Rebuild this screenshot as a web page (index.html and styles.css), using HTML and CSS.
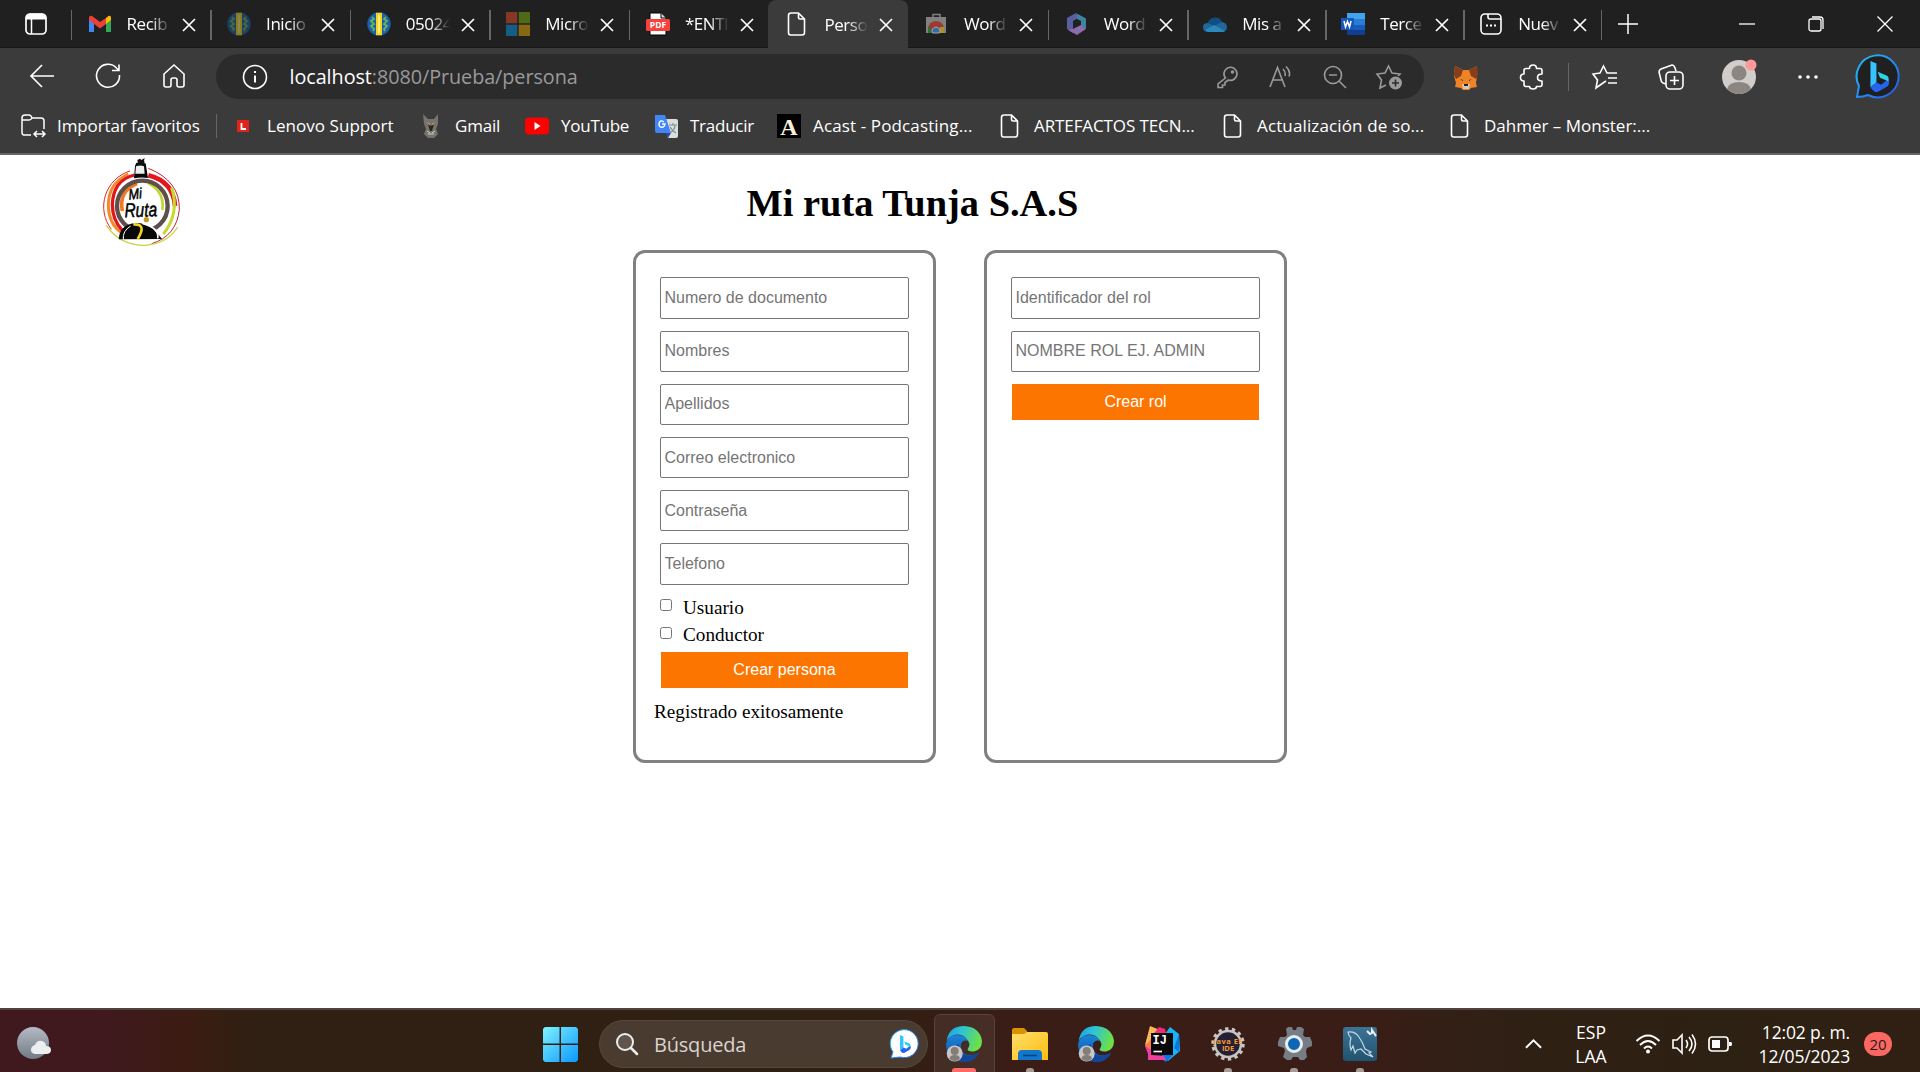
FILE: index.html
```html
<!DOCTYPE html>
<html lang="es">
<head>
<meta charset="utf-8">
<title>Persona</title>
<link rel="stylesheet" href="styles.css">
</head>
<body>
<svg class="defs" aria-hidden="true">
  <defs>
    <linearGradient id="gEdge" x1="0" y1="0" x2="1" y2=".3"><stop offset="0" stop-color="#1f9be6"/><stop offset=".45" stop-color="#2cc3d6"/><stop offset="1" stop-color="#6be04a"/></linearGradient>
    <linearGradient id="gEdge2" x1="0" y1="0" x2="0" y2="1"><stop offset="0" stop-color="#1a86dc"/><stop offset="1" stop-color="#114a9c"/></linearGradient>
    <linearGradient id="gBing" x1="0" y1="0" x2="1" y2="1"><stop offset="0" stop-color="#22c3f4"/><stop offset="1" stop-color="#2456f0"/></linearGradient>
    <linearGradient id="gWin" x1="0" y1="0" x2="1" y2="1"><stop offset="0" stop-color="#7df3ff"/><stop offset="1" stop-color="#0a97ff"/></linearGradient>
    <linearGradient id="gMoon" x1="0" y1="0" x2="0" y2="1"><stop offset="0" stop-color="#b4bbc4"/><stop offset="1" stop-color="#727a84"/></linearGradient>
    <linearGradient id="gFold" x1="0" y1="0" x2="1" y2="1"><stop offset="0" stop-color="#ffe06b"/><stop offset="1" stop-color="#fdbc10"/></linearGradient>
    <linearGradient id="gSql" x1="0" y1="0" x2="0" y2="1"><stop offset="0" stop-color="#3c7396"/><stop offset="1" stop-color="#20536e"/></linearGradient>
  </defs>
  <symbol id="x" viewBox="0 0 16 16"><path d="M2 2l12 12M14 2L2 14" fill="none" stroke="#fff" stroke-width="1.7"/></symbol>
  <symbol id="doc" viewBox="0 0 24 24"><path d="M5.500 1h8l6 6v13.500q0 2.500-2.500 2.500H5.500Q3.500 23 3.500 20.500V3.500Q3.500 1 6 1M13.500 1v4.500q0 1.500 1.500 1.500h4.500" fill="none" stroke="#fff" stroke-width="1.6" stroke-linejoin="round"/></symbol>
  <symbol id="crest" viewBox="0 0 24 24"><circle cx="12" cy="12" r="11.700" fill="#1c5fa8"/><path d="M9 .8h6v22.400H9z" fill="#f4d51d"/><path d="M5 5l2 2-3 2 3 3-3 2 3 3-1 2M19 5l-2 2 3 2-3 3 3 2-3 3 1 2" stroke="#66b560" stroke-width="1.800" fill="none"/><path d="M12 3v18" stroke="#fff3a0" stroke-width="1.500"/></symbol>
  <symbol id="edge" viewBox="0 0 36 36"><path d="M0 18Q2 9 11 9q9 0 11 6-5-2-7 3-1 7 4 10 6 3 14-1-5 9-15 9Q0 35 0 18z" fill="url(#gEdge2)"/><path d="M13 18q-1 9 6 11 6 2 14-2-4 9-15 9-11-3-9-13 1-4 4-5z" fill="#10479b"/><path d="M.5 15Q3 0 18 0q16 1 18 15 0 9-8 10.500-6 0-6.500-2 .5-1 1.500-3 1-3-1-6Q18 8 11 8.500 4 9 .5 15z" fill="url(#gEdge)"/><circle cx="8.700" cy="27.500" r="8" fill="#c9c6c3"/><circle cx="8.700" cy="25" r="4" fill="#827d79"/><path d="M3.500 33q0-4 5.200-4t5.200 4q-5 4-10.400 0z" fill="#827d79"/></symbol>
  <symbol id="bingb" viewBox="0 0 16 26"><path d="M0 0l5 2v16l-5 4z" fill="#35c2ff"/><path d="M0 22l5-4 4 2 6-5q2 5-2 7l-7 4q-3 1-6-4z" fill="#2763ee"/><path d="M6 9l7 3q3 1 2 5l-7-3z" fill="#2ed4e5"/></symbol>
</svg>

<div class="screen">
  <header class="browser">
    <div class="tabs">
      <div class="tab-menu"><svg class="i24" viewBox="0 0 24 24"><rect x="2" y="2" width="20" height="20" rx="4" fill="none" stroke="#fff" stroke-width="1.700"/><path d="M2 7V6q0-4 4-4h12q4 0 4 4v1z" fill="#fff" stroke="#fff"/><path d="M7.500 7v15" stroke="#fff" stroke-width="1.500"/></svg></div>
      <div class="tab"><svg class="i24" viewBox="0 0 24 24"><path d="M1 6v14h5V10z" fill="#4285f4"/><path d="M18 10v10h5V6z" fill="#34a853"/><path d="M18 6l2.500-2Q23 3 23 6v2l-5 4z" fill="#fbbc04"/><path d="M1 8V6q0-3 3-2l8 6 6-4v6l-6 4.500z" fill="#ea4335"/></svg><span>Recib</span><svg class="x"><use href="#x"/></svg></div>
      <div class="tab"><svg class="i24 dim"><use href="#crest"/></svg><span>Inicio</span><svg class="x"><use href="#x"/></svg></div>
      <div class="tab"><svg class="i24"><use href="#crest"/></svg><span>05024</span><svg class="x"><use href="#x"/></svg></div>
      <div class="tab"><svg class="i24" viewBox="0 0 24 24"><path d="M0 0h11.300v11.300H0z" fill="#843725"/><path d="M12.700 0H24v11.300H12.700z" fill="#4d6b14"/><path d="M0 12.700h11.300V24H0z" fill="#155d82"/><path d="M12.700 12.700H24V24H12.700z" fill="#876813"/></svg><span>Micro</span><svg class="x"><use href="#x"/></svg></div>
      <div class="tab last"><svg class="i24 pdf-icon" viewBox="0 0 24 24"><path d="M4 1h11l5 5v17H4z" fill="#fff" stroke="#000"/><path d="M15 1v5h5" fill="#ddd" stroke="#000"/><rect x="0" y="7" width="24" height="12" rx="1.500" fill="#f7413d"/><text x="12" y="16.200" text-anchor="middle" class="pdf">PDF</text></svg><span>*ENTI</span><svg class="x"><use href="#x"/></svg></div>
      <div class="tab active"><svg class="i24"><use href="#doc"/></svg><span>Perso</span><svg class="x"><use href="#x"/></svg></div>
      <div class="tab"><svg class="i24 dim2" viewBox="0 0 24 24"><path d="M8 5V2.500h7V5" fill="none" stroke="#aaa" stroke-width="1.500"/><path d="M1 5h20v16H1z" fill="#aaa"/><path d="M3 17a8 8 0 0 1 16 0v4H3z" fill="#d34537"/><path d="M3 14l6 7H3z" fill="#299a4a"/><path d="M15 15h4v6h-6z" fill="#e8c32d"/><path d="M7.500 21a4 4 0 1 1 7 0z" fill="#428ce0" stroke="#ddd"/></svg><span>Word</span><svg class="x"><use href="#x"/></svg></div>
      <div class="tab"><svg class="i24" viewBox="0 0 24 24"><path d="M11 1L2 6v11l6 4 4-2-4-2V9l5-3z" fill="#5b5fa0"/><path d="M11 1l10 5.500V17l-5-3V9l-4-2V1z" fill="#3d83a2"/><path d="M8 17l8-4 5 4-9 6-9-5z" fill="#8d6cab"/></svg><span>Word</span><svg class="x"><use href="#x"/></svg></div>
      <div class="tab mid"><svg class="i24" viewBox="0 0 24 24"><path d="M5 11a7.500 7.500 0 0 1 14-1q5 1 5 5t-4 5H5q-5 0-5-5 0-4 5-4z" fill="#20679b"/><path d="M5 11a7.500 7.500 0 0 1 14-1l-8 4z" fill="#134d80"/><path d="M2 18l9-5 11 6-2 1H5z" fill="#2b8abb"/></svg><span>Mis a</span><svg class="x"><use href="#x"/></svg></div>
      <div class="tab narrow"><svg class="i24" viewBox="0 0 24 24"><path d="M6 1h18v6H6z" fill="#41a5ee"/><path d="M6 7h18v6H6z" fill="#2b7cd3"/><path d="M6 13h18v5H6z" fill="#185abd"/><path d="M6 18h18v5H6z" fill="#103f91"/><path d="M0 6h13v12H0z" fill="#1857b8"/><path d="M3 9l1.500 6 2-5.500 2 5.500L10 9" fill="none" stroke="#fff" stroke-width="1.500"/></svg><span>Terce</span><svg class="x"><use href="#x"/></svg></div>
      <div class="tab narrow"><svg class="i24" viewBox="0 0 24 24"><rect x="2" y="2" width="20" height="20" rx="4" fill="none" stroke="#fff" stroke-width="1.600"/><path d="M9 2v3q0 2 2 2h11" fill="none" stroke="#fff" stroke-width="1.600"/><path d="M7 13.500h2M11 13.500h2M15 13.500h2" stroke="#fff" stroke-width="2.200"/></svg><span>Nuev</span><svg class="x"><use href="#x"/></svg></div>
      <div class="new-tab"><svg class="i24" viewBox="0 0 24 24"><path d="M12 2v20M2 12h20" stroke="#fff" stroke-width="1.500"/></svg></div>
      <div class="window-buttons">
        <svg viewBox="0 0 16 16"><path d="M0 8h16" stroke="#fff" stroke-width="1.300"/></svg>
        <svg viewBox="0 0 16 16"><rect x="1" y="3" width="12" height="12" rx="2" fill="none" stroke="#fff" stroke-width="1.300"/><path d="M4 1h8q3 0 3 3v9" fill="none" stroke="#fff" stroke-width="1.300"/></svg>
        <svg viewBox="0 0 16 16"><path d="M.5 .5l15 15M15.500 .5l-15 15" stroke="#fff" stroke-width="1.300"/></svg>
      </div>
    </div>

    <div class="toolbar">
      <div class="nav">
        <svg class="i26" viewBox="0 0 26 26"><path d="M25 13H2M13 2L2 13l11 11" /></svg>
        <svg class="i26" viewBox="0 0 26 26"><path d="M24.500 12A11.500 11.500 0 1 1 21.500 5L24 7.500M24 1.500v6h-7"/></svg>
        <svg class="i26" viewBox="0 0 26 26"><path d="M3 11L13 2l10 9v11q0 2-2 2h-3q-2 0-2-2v-5q0-2-2-2h-2q-2 0-2 2v5q0 2-2 2H5q-2 0-2-2z"/></svg>
      </div>
      <div class="address">
        <svg class="i26" viewBox="0 0 26 26"><circle cx="13" cy="13" r="11.500"/><path d="M13 11.500v7M13 7v2" stroke-width="2"/></svg>
        <div class="url"><b>localhost</b>:8080/Prueba/persona</div>
        <div class="address-icons">
          <svg class="i26" viewBox="0 0 26 26"><path d="M11.500 14L4 20v3.500h4.500V21h2.500v-2.500l3.500-2.500a6.500 6.500 0 1 0-3-2z"/><circle cx="18.500" cy="8" r="1"/></svg>
          <svg class="i26" viewBox="0 0 26 26"><path d="M2 23L9.500 3.500 17 23M5 16h9M15 5q3 3 2 7M18 2.500q5 5 3 10"/></svg>
          <svg class="i26" viewBox="0 0 26 26"><circle cx="11" cy="11" r="8.500"/><path d="M7 11h8M17 17l7 7"/></svg>
          <svg class="i26" viewBox="0 0 26 26"><path d="M10 21l-6 3 1.500-8L1 10l8-1 3.500-7L16 9l8 1-2 2"/><circle cx="19.500" cy="19" r="6.500" fill="#9a9a9a" stroke="none"/><path d="M19.500 15.500v7M16 19h7" stroke="#2b2b2b"/></svg>
        </div>
      </div>
      <div class="extensions">
        <svg class="i26" viewBox="0 0 26 26"><g stroke="none"><path d="M2 2l8 4h6l8-4v10l-1 7 1 4-6 1-2 2h-6l-2-2-6-1 1-4-2-7z" fill="#ef8325"/><path d="M2 2l8 4-2 6-5 3-2-4zM24 2l-8 4 2 6 5 3 2-4z" fill="#873e1c"/><path d="M9 20h8l-1 5h-6z" fill="#d5c9bd"/><path d="M11 20h4v2h-4zM7 15l3 1v1zM19 15l-3 1v1z" fill="#222"/></g></svg>
        <svg class="i26" viewBox="0 0 26 26"><path d="M7 4.500h3.500q0-3.500 3.500-3.500t3.500 3.500H21q2 0 2 2V10q-4.500 0-4.500 3.500T23 17v3.500q0 2-2 2h-3.500q0 2.500-3.500 2.500t-3.500-2.500H7q-2 0-2-2V17q-3.500 0-3.500-3.500T5 10V6.500q0-2 2-2z" stroke-linejoin="round"/></svg>
        <i class="sep"></i>
        <svg class="i26" viewBox="0 0 26 26"><path d="M11 19l-7 5 1.500-8L1 10l7-1 3.500-7L15 9h10M16 14h9M16 19h9M11 19l3-2"/></svg>
        <svg class="i26" viewBox="0 0 26 26"><path d="M8 20L5 19Q3 18 3 16L1 8q0-2 2-3l11-4q2 0 3 3l1 3"/><rect x="8" y="8" width="17" height="17" rx="4"/><path d="M16.500 12v9M12 16.500h9"/></svg>
        <svg class="avatar" viewBox="0 0 38 42"><circle cx="18" cy="21" r="17" fill="#d0cdca"/><circle cx="18" cy="17" r="7.500" fill="#8b8682"/><path d="M6 33q2-7 12-7t12 7q-12 10-24 0z" fill="#8b8682"/><circle cx="30" cy="9" r="5.500" fill="#ff9999"/></svg>
        <svg class="i26" viewBox="0 0 26 26"><g fill="#fff" stroke="none"><circle cx="5" cy="13" r="1.800"/><circle cx="13" cy="13" r="1.800"/><circle cx="21" cy="13" r="1.800"/></g></svg>
        <svg class="bing" viewBox="0 0 46 46"><path d="M2 44l2-11A21 21 0 1 1 13 42Q8 44 2 44z" fill="#202020" stroke="url(#gBing)" stroke-width="2"/><use href="#bingb" x="15" y="8" width="20" height="31"/></svg>
      </div>
    </div>

    <nav class="bookmarks">
      <a class="first"><svg class="i24" viewBox="0 0 24 24"><path d="M10 21H3q-2 0-2-3V4q0-3 3-3h4q2 0 3 3h9q3 0 3 3v8M1 6h7q2 0 3-2M13 20h11M16 17l-3 3 3 3M21 17l3 3-3 3" fill="none" stroke="#fff" stroke-width="1.500"/></svg><span>Importar favoritos</span></a>
      <a><svg class="i24" viewBox="0 0 24 24"><path d="M6 6h12v12H6z" fill="#e2231a"/><path d="M10.500 9v6H15" fill="none" stroke="#fff" stroke-width="1.800"/></svg><span>Lenovo Support</span></a>
      <a><svg class="i24" viewBox="0 0 24 24"><path d="M4 0l5 5h6l4-5v10l-2 5 2 5-4 4H9l-4-4 2-5-2-5z" fill="#77736d"/><path d="M8 8l3 2v3zM16 8l-3 2v3z" fill="#c9aa71"/><path d="M9 10l3 2 3-2-2 7h-2z" fill="#29251f"/><path d="M9 20h6M8 17l3 2M16 17l-3 2" stroke="#ccc"/></svg><span>Gmail</span></a>
      <a><svg class="i24" viewBox="0 0 24 24"><rect y="3.500" width="24" height="17" rx="4" fill="#f00"/><path d="M9.500 8v8l6-4z" fill="#fff"/></svg><span>YouTube</span></a>
      <a><svg class="i24" viewBox="0 0 24 24"><path d="M10 5h12q2 0 2 2v15q0 2-2 2h-8z" fill="#ddd"/><path d="M1 1h10l6 18H3q-2 0-2-2z" fill="#4285f4"/><path d="M12 19h5l-3 5z" fill="#3046a8"/><path d="M10 8q-4-3-5 2 0 4 4 3 2-1 2-3H8" fill="none" stroke="#fff" stroke-width="1.400"/><path d="M15 11h8M19 9v2M16 19q5-3 5-8M16 13q2 4 6 6" fill="none" stroke="#78909c" stroke-width="1.200"/></svg><span>Traducir</span></a>
      <a><svg class="i24" viewBox="0 0 24 24"><path d="M0 0h24v24H0z" fill="#000"/><text x="12" y="20.500" text-anchor="middle" class="acast">A</text></svg><span>Acast - Podcasting...</span></a>
      <a><svg class="i24"><use href="#doc"/></svg><span>ARTEFACTOS TECN...</span></a>
      <a><svg class="i24"><use href="#doc"/></svg><span>Actualización de so...</span></a>
      <a><svg class="i24"><use href="#doc"/></svg><span>Dahmer – Monster:...</span></a>
    </nav>
  </header>

  <main class="page">
    <div class="masthead">
      <svg class="logo" viewBox="0 0 390 330"><g fill="none"><path d="M94 250A112 112 0 0 1 150 75" stroke="#e3281c" stroke-width="3"/><path d="M205 67Q300 105 298 190 290 270 215 293" stroke="#bd2231" stroke-width="3"/><path d="M79 238q40 60 116 60 68-5 98-55" stroke="#cad23e" stroke-width="4"/><path d="M145 84Q84 112 85 180q2 54 38 79" stroke="#f28a2b" stroke-width="9"/><path d="M163 87q-63 15-66 88 0 48 30 78" stroke="#df171d" stroke-width="10"/><path d="M205 88q75 19 80 92" stroke="#e3171d" stroke-width="14"/><path d="M275 125q25 76-25 139" stroke="#c7d82e" stroke-width="9"/><path d="M127 195q-12-60 44-82" stroke="#f17925" stroke-width="11"/><path d="M205 112q50 26 42 80" stroke="#c3d62e" stroke-width="8"/><circle cx="187" cy="180" r="76" stroke="#5d4f4b" stroke-width="13"/></g><path d="M165 60l4-10 28 2 7 44q-20-4-42 1z" fill="#080808"/><path d="M168 61q12-5 24 0l2 22h-28z" fill="#eee"/><path d="M172 42l8-4 4 4 10-6-2 8 2 4-4 8-14 2-2-6z" fill="#111"/><path d="M116 280q3-45 52-49 42-2 78 48z" fill="#080808"/><path d="M160 235q42-2 13 44" fill="none" stroke="#f0d323" stroke-width="8"/><path d="M187 232q52 14 46 45" fill="none" stroke="#fff" stroke-width="5"/><path d="M130 280q-3-25 22-40" fill="none" stroke="#fff" stroke-width="3"/><circle cx="199" cy="221" r="8" fill="#c59a20"/><text transform="translate(147 161) rotate(-6)" textLength="40" lengthAdjust="spacingAndGlyphs" class="logo-mi">Mi</text><text transform="translate(134 214) rotate(-2)" textLength="98" lengthAdjust="spacingAndGlyphs" class="logo-ruta">Ruta</text></svg>
      <h1>Mi ruta Tunja S.A.S</h1>
    </div>
    <div class="cards">
      <form class="card">
        <input type="text" placeholder="Numero de documento">
        <input type="text" placeholder="Nombres">
        <input type="text" placeholder="Apellidos">
        <input type="text" placeholder="Correo electronico">
        <input type="text" placeholder="Contraseña">
        <input type="text" placeholder="Telefono">
        <label><i class="check"></i><span>Usuario</span></label>
        <label><i class="check"></i><span>Conductor</span></label>
        <button type="button" class="tight">Crear persona</button>
        <p>Registrado exitosamente</p>
      </form>
      <form class="card">
        <input type="text" placeholder="Identificador del rol">
        <input type="text" placeholder="NOMBRE ROL EJ. ADMIN">
        <button type="button">Crear rol</button>
      </form>
    </div>
  </main>

  <footer class="taskbar">
    <svg class="weather" viewBox="0 0 36 34"><circle cx="16" cy="16" r="16" fill="url(#gMoon)"/><path d="M18 27q-4-1-4-4 0-4 4-5 2-5 7-4 4 1 4 5 5 0 5 4 0 4-5 4z" fill="#eceef1"/></svg>
    <svg class="start" viewBox="0 0 36 36"><path d="M2 0h15v17H0V2zM18.500 0H34l2 2v15H18.500zM0 18.500h17V36H2l-2-2zM18.500 18.500H36V34l-2 2H18.500z" fill="url(#gWin)"/></svg>
    <div class="search">
      <svg class="i24" viewBox="0 0 24 24"><circle cx="10" cy="10" r="8" fill="#ffffff22" stroke="#eee" stroke-width="2"/><path d="M16 16l6 6" stroke="#eee" stroke-width="2.500" stroke-linecap="round"/></svg>
      <span>Búsqueda</span>
      <svg class="search-bing" viewBox="0 0 30 30"><path d="M1 29l2-6A14 14 0 1 1 10 28z" fill="#fff" stroke="url(#gBing)"/><use href="#bingb" x="10" y="6" width="11" height="18"/></svg>
    </div>
    <div class="apps">
      <div class="app current"><svg><use href="#edge"/></svg></div>
      <div class="app run"><svg viewBox="0 0 36 36"><path d="M0 4q0-2 2-2h10l3 3v5H0z" fill="#d99200"/><path d="M0 8h12l3-2h19q2 0 2 2v26H0z" fill="url(#gFold)"/><path d="M6 34v-6q0-4 4-4h16q4 0 4 4v6z" fill="#1177cc"/><path d="M11 29.500h14" stroke="#07447c" stroke-width="1.600"/></svg></div>
      <div class="app"><svg><use href="#edge"/></svg></div>
      <div class="app"><svg viewBox="0 0 36 36"><path d="M6 0l10 4-2 12L1 19z" fill="#fcb857"/><path d="M15 1l6 2 2 8H7z" fill="#f22b78"/><path d="M21 8l5-7 9 7 1 17-12 10-6-6z" fill="#18b4f5"/><path d="M35 8l-5 14 5 4zM20 28h10l-8 8-6-4z" fill="#0877e8"/><path d="M1 20l7-6v15l12 1 2 4H4v-6z" fill="#ef3fa0"/><path d="M1 20l7-8v12z" fill="#ff7a40"/><path d="M7 7h22v22H7z" fill="#0b080c"/><text x="8.500" y="18" class="ij">IJ</text><path d="M9.500 25.500h8.500" stroke="#fff" stroke-width="1.600"/></svg></div>
      <div class="app run"><svg viewBox="0 0 36 36"><circle cx="18" cy="18" r="13" fill="#251f33" stroke="#c4c4c0" stroke-width="2.500"/><circle cx="18" cy="18" r="15.200" fill="none" stroke="#c7c7c3" stroke-width="3" stroke-dasharray="3.410 3.410"/><text x="18" y="17.500" text-anchor="middle" textLength="29" class="java">Java EE</text><text x="18" y="25" text-anchor="middle" class="java">IDE</text></svg></div>
      <div class="app run"><svg viewBox="0 0 36 36"><path d="M12 1h4l1 3h3l1-3h4l3 2-1 6 2 2h5l2 5v4l-5 2-1 3 1 6-3 3h-4l-2-3h-5l-2 3h-4l-4-3 2-6-1-3-6-2v-4l2-5h5l2-2-1-6z" fill="#767d84"/><circle cx="18" cy="18" r="7.500" fill="#0b66b6" stroke="#e9edf0" stroke-width="3"/></svg></div>
      <div class="app run"><svg viewBox="0 0 36 36"><rect x="1" y="1" width="34" height="34" rx="3" fill="url(#gSql)"/><path d="M6 6q7-1 11 5 4 6 6 12l6 3-2 1 4 4-7-3-5-5-4 1-2 3-2-7-2 4Q7 18 9 12 6 9 6 6z" fill="none" stroke="#c3d7e4" stroke-width="1.200"/><path d="M25 5l3 3 2-1V4l4 6-1-1" fill="none" stroke="#eee" stroke-width="2"/></svg></div>
    </div>
    <div class="tray">
      <svg class="chev" viewBox="0 0 18 12"><path d="M1 10l8-8 8 8" fill="none" stroke="#fff" stroke-width="2"/></svg>
      <div class="lang">ESP<br>LAA</div>
      <svg class="i24" viewBox="0 0 24 24"><path d="M.5 9Q12-2 23.500 9M4 13q8-8 16 0M8 16.500q4-4 8 0" fill="none" stroke="#fff" stroke-width="1.800"/><circle cx="12" cy="19.500" r="2" fill="#fff"/></svg>
      <svg class="i24" viewBox="0 0 24 24"><path d="M1 8h4l5-5v18l-5-5H1zM14 8q3 4 0 8M17 5q6 7 0 14M20 2.500q7 9.500 0 19" fill="none" stroke="#fff" stroke-width="1.600"/></svg>
      <svg class="i24" viewBox="0 0 24 24"><rect x="1" y="5" width="19" height="14" rx="3" fill="none" stroke="#fff" stroke-width="1.700"/><path d="M4 8h8v8H4zM21 10h2q1 0 1 2t-1 2h-2z" fill="#fff"/></svg>
      <div class="clock">12:02 p. m.<br>12/05/2023</div>
      <div class="count">20</div>
    </div>
  </footer>
</div>
</body>
</html>
```
FILE: styles.css
```css
* { box-sizing: border-box; }
body { margin: 0; background: #fff; font-family: "Open Sans", "Noto Sans", sans-serif; }
svg { display: block; flex: none; overflow: visible; }
.defs { width: 0; height: 0; position: absolute; }
.screen { width: 1920px; height: 1072px; display: flex; flex-direction: column; overflow: hidden; }
.i24 { width: 24px; height: 24px; }
.i26 { width: 26px; height: 26px; }

/* Browser frame */
.browser { height: 155px; flex: none; background: #3b3b3b; border-bottom: 2px solid #666; color: #fff; }
.tabs { height: 48px; display: flex; background: #202020; border-bottom: 1px solid #171717; }
.tab-menu { width: 70.500px; padding: 12px 0 0 24px; }
.tab { width: 139.600px; display: flex; align-items: center; padding-left: 17px; position: relative; }
.tab::before { content: ""; position: absolute; left: 0; top: 10px; width: 1.500px; height: 30px; background: #666; }
.tab.mid { width: 138px; padding-left: 16px; }
.tab.narrow { width: 138px; padding-left: 16px; }
.tab.active { background: #3b3b3b; height: 48px; border-radius: 8px 8px 0 0; }
.tab.active::before, .tab.active + .tab::before { display: none; }
.tab span { width: 44px; margin-left: 15px; white-space: nowrap; font-size: 17px; letter-spacing: -.45px; -webkit-mask-image: linear-gradient(90deg, #000 55%, transparent 100%); mask-image: linear-gradient(90deg, #000 55%, transparent 100%); }
.tab .x { width: 16px; height: 16px; margin-left: 10px; margin-top: 2px; }
.dim { opacity: .5; }
.dim2 { opacity: .7; }
.pdf { font: bold 8.500px "Open Sans", sans-serif; fill: #fff; }
.new-tab { border-left: 1.500px solid #666; height: 30px; margin-top: 10px; padding: 2px 0 0 14px; }
.window-buttons { margin-left: auto; display: flex; align-items: center; gap: 53px; padding-right: 27px; }
.window-buttons svg { width: 16px; height: 16px; }

.toolbar { height: 57px; display: flex; align-items: center; }
.toolbar svg { fill: none; stroke: #fff; stroke-width: 1.600; }
.nav { width: 216px; display: flex; gap: 40px; padding-left: 29px; }
.nav svg { margin-top: -2px; }
.address { width: 1208px; height: 45px; border-radius: 23px; background: #2b2b2b; display: flex; align-items: center; padding-left: 26px; }
.url { margin-left: 21.500px; font-size: 19.800px; letter-spacing: -.06px; color: #9a9a9a; }
.url b { color: #fff; font-weight: 400; }
.address-icons { margin-left: auto; display: flex; gap: 28px; padding-right: 22px; }
.toolbar .address-icons svg { stroke: #9a9a9a; }
.extensions { flex: 1; display: flex; align-items: center; padding-left: 29px; }
.extensions svg:nth-of-type(2) { margin-left: 40px; }
.sep { width: 1.500px; height: 28px; background: #666; margin: 0 22.500px; }
.extensions svg:nth-of-type(4) { margin-left: 40px; }
.extensions .avatar { width: 38px; height: 42px; margin-left: 37.500px; stroke: none; }
.extensions svg:nth-of-type(6) { margin-left: 36px; }
.extensions .bing { width: 46px; height: 46px; margin: -2px 0 0 34px; stroke: none; }

.bookmarks { height: 41px; display: grid; grid-template-columns: 217px 202px 106px 129px 123px 221px 223px 227px 220px; align-items: center; font-size: 17px; letter-spacing: -.1px; }
.bookmarks a { display: flex; align-items: center; gap: 12px; white-space: nowrap; }
.bookmarks .first { padding-left: 21px; height: 24px; border-right: 1.500px solid #666; }
.bookmarks a:nth-child(2) { padding-left: 14px; }
.bookmarks a:nth-child(2) { letter-spacing: .05px; }
.bookmarks a:nth-child(3) { letter-spacing: -.2px; }
.bookmarks a:nth-child(4), .bookmarks a:nth-child(5) { letter-spacing: -.25px; }
.bookmarks a:nth-child(6), .bookmarks a:nth-child(8) { letter-spacing: .13px; }
.bookmarks a:nth-child(9) { letter-spacing: 0; }
.acast { font: bold 24px "Liberation Serif", serif; fill: #f9eed9; }

/* Page content */
.page { flex: 1; font-family: "Liberation Serif", serif; font-size: 19.200px; color: #000; background: #fff; }
.masthead { height: 95px; display: flex; }
.logo { width: 130px; height: 110px; margin: -9px 0 0 80px; }
.logo-mi { font: italic 400 44px "Liberation Sans", sans-serif; stroke: #000; stroke-width: 1.500px; }
.logo-ruta { font: italic 400 60px "Liberation Sans", sans-serif; stroke: #000; stroke-width: 1.500px; }
h1 { margin: 26px 0 0 536.500px; font-size: 38.400px; line-height: 44px; white-space: nowrap; }
.cards { display: flex; justify-content: center; gap: 48px; }
.card { width: 303px; height: 513px; border: 3px solid #808080; border-radius: 12px; padding: 24.400px 24px 0; display: flex; flex-direction: column; }
.card input { display: block; width: 249px; height: 41.200px; margin: 0 0 12px; padding: 1px 3.500px; border: 1px solid #767676; border-radius: 2px; font: 16px "Liberation Sans", sans-serif; background: #fff; flex: none; }
.card input::placeholder { color: #757575; }
.card label { display: flex; height: 27px; line-height: 22px; flex: none; }
.check { width: 12px; height: 12px; margin-top: 2px; border: 1.200px solid #767676; border-radius: 2.500px; }
.card label span { margin-left: 11px; }
.card label:last-of-type .check { margin-top: 3px; }
.card button { width: 247px; height: 36px; margin-left: 1px; border: 0; background: #fb7500; color: #fff; font: 16px "Liberation Sans", sans-serif; padding: 0; flex: none; }
.card button.tight { margin-top: 1.500px; }
.card p { margin: 13px 0 0 -6px; line-height: 22px; white-space: nowrap; }

/* Taskbar */
.taskbar { height: 64px; flex: none; border-top: 2px solid #50423d; background: linear-gradient(90deg, #40191f 0, #40191f 5%, #3b1c12 10%, #302013 13%, #302013 33%, #2d2113 38%, #321f14 46%, #3a1d16 53%, #3a1d16 71%, #302015 77%, #2d2113 90%, #302013 100%); display: flex; align-items: center; color: #fff; }
.weather { width: 36px; height: 34px; margin: 6px 0 0 17px; }
.start { width: 35px; height: 35px; margin: 7px 0 0 490px; }
.search { width: 329px; height: 48px; margin: 6px 0 0 21px; border: 1px solid #55483a; border-radius: 24px; background: #493b30; display: flex; align-items: center; padding: 0 8px 0 15px; }
.search span { margin-left: 15px; font-size: 20px; letter-spacing: -.2px; color: #d9d4cf; flex: 1; }
.search-bing { width: 30px; height: 30px; margin-right: -1px; }
.apps { display: flex; height: 62px; margin-left: 3px; }
.app { width: 66px; position: relative; padding: 16px 0 0 15px; }
.app svg { width: 36px; height: 36px; }
.app.current::before { content: ""; position: absolute; left: 3px; top: 4px; width: 59px; height: 62px; border: 1px solid #5a4240; border-radius: 6px; background: #ffffff12; }
.app.current svg { position: relative; }
.app.run::after, .app.current::after { content: ""; position: absolute; left: 29px; bottom: 0; width: 8px; height: 4px; border-radius: 3px 3px 0 0; background: #a59a94; }
.app.current::after { left: 21px; width: 24px; background: #ff6b66; }
.ij { font: bold 12px "Liberation Mono", monospace; fill: #fff; }
.java { font: bold 7.500px "Open Sans", sans-serif; fill: #f89a32; }
.tray { margin-left: auto; display: flex; align-items: center; padding: 6px 28px 0 0; font-size: 17.500px; line-height: 24px; letter-spacing: 0; }
.chev { width: 17px; height: 12px; margin-right: 31px; }
.lang { width: 36px; margin-right: 27px; text-align: center; }
.tray .i24 { margin-right: 12px; }
.clock { width: 106px; text-align: right; white-space: nowrap; margin-right: 14px; }
.clock { letter-spacing: -.15px; }
.count { width: 28px; height: 24px; border-radius: 14px; background: #fb6763; color: #291b18; text-align: center; font-size: 15px; line-height: 24px; }
```
